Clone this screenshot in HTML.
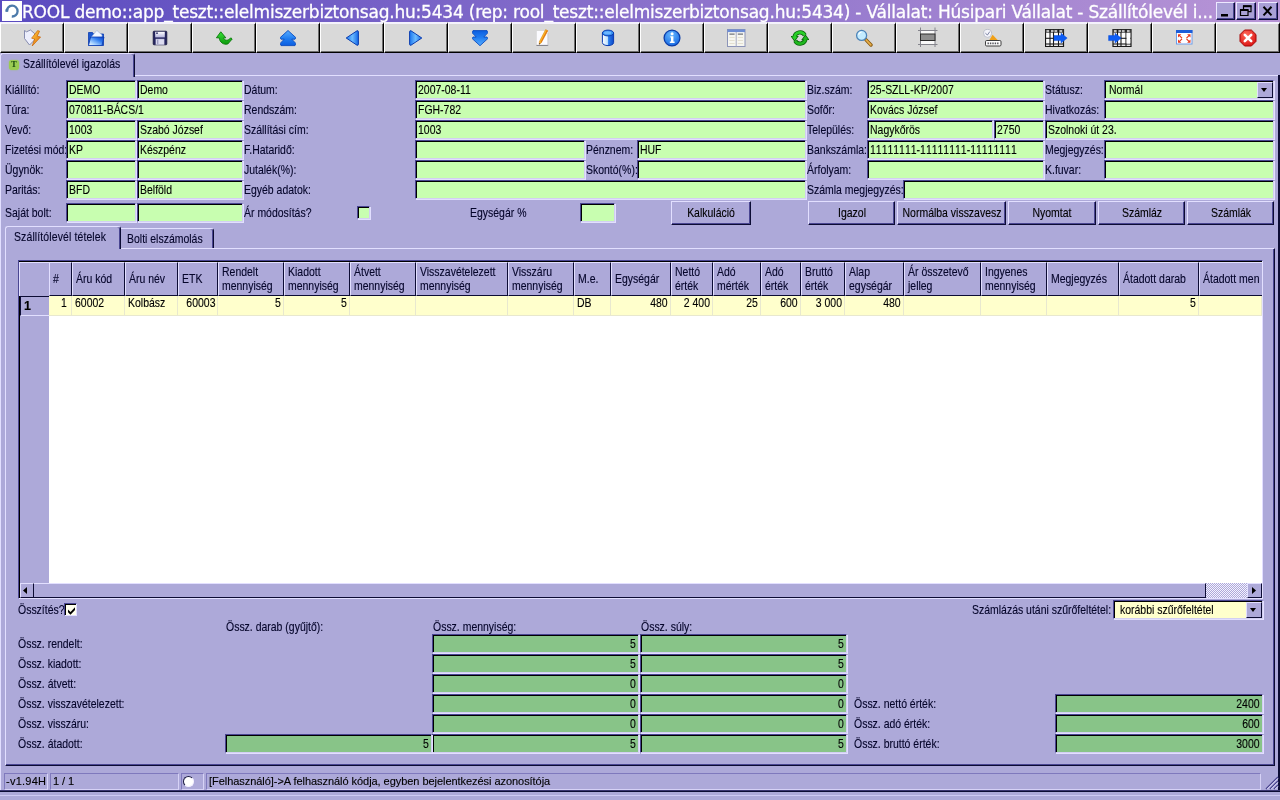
<!DOCTYPE html>
<html lang="hu"><head><meta charset="utf-8"><title>ROOL</title>
<style>
*{box-sizing:border-box;margin:0;padding:0}
html,body{width:1280px;height:800px;overflow:hidden;background:#ada9d9}
body{position:relative;font-family:"Liberation Sans","DejaVu Sans",sans-serif;font-size:12.400px;color:#05052a;line-height:13px;-webkit-text-stroke:.12px}
#w{position:absolute;left:0;top:0;width:1280px;height:800px;overflow:hidden;will-change:transform;background:#ada9d9}
#w>div,#grid>div{position:absolute}
#title{left:0;top:0;width:1280px;height:22px;background:linear-gradient(90deg,#5a4bc0 0%,#b895d6 100%)}
#title>div{position:absolute}
#appico{left:2px;top:1px;width:20px;height:20px;background:#fff}
#ttext{left:22px;top:2px;height:20px;line-height:21px;overflow:hidden;-webkit-text-stroke:0.3px #fff;font-family:"DejaVu Sans","Liberation Sans",sans-serif;font-size:17px;color:#fff;white-space:nowrap;letter-spacing:-0.21px}
.wb{top:2px;width:19px;height:18px;background:#a9a0d6;border-top:1px solid #ece8ff;border-left:1px solid #ece8ff;border-right:1px solid #0c0c34;border-bottom:1px solid #0c0c34;box-shadow:inset -1px -1px 0 #4a4590}
.wb svg{position:absolute;left:-1px;top:-1px}
.tb{top:22px;width:64px;height:31px;background:#d9d9d9;border-top:2px solid #fff;border-top-color:#f4f2fc;border-left:1px solid #fff;border-right:1px solid #000;border-bottom:1px solid #000;box-shadow:inset -1px -1px 0 #6e6e6e}
.tb svg{position:absolute}
#tabline{left:0;top:75px;width:1278px;height:1px;background:#e2dfff}
#frl{left:0;top:75px;width:1px;height:715px;background:#e2dfff}
#frr{left:1278px;top:75px;width:2px;height:717px;background:#0c0c34}
#maintab{left:0;top:53px;width:135px;height:24px;background:#ada9d9;border-top:1px solid #e2dfff;border-left:1px solid #e2dfff;border-right:1px solid #0c0c34;box-shadow:inset -1px 0 0 #4a4692;border-radius:3px 3px 0 0}
.tico{position:absolute;left:8px;top:6px;width:10px;height:10px;background:#9acb52;border-radius:3px;box-shadow:0 0 1.500px #9acb52;font:bold 8px/10px "Liberation Serif",serif;color:#1a4a10;text-align:center;letter-spacing:0}
.tl{position:absolute;left:22px;top:4px;white-space:nowrap}
.l{white-space:nowrap;height:13px;line-height:13px;transform:scaleX(.845);transform-origin:0 0}
.t{display:inline-block;white-space:nowrap;transform:scaleX(.845);transform-origin:0 0}
.tr{transform-origin:100% 0}
.tc{position:absolute;left:50%;top:0;white-space:nowrap;transform:translateX(-50%) scaleX(.845)}
.f{background:#c8feb0;border-top:1px solid #4a4692;border-left:1px solid #4a4692;border-right:1px solid #d2cff2;border-bottom:1px solid #d2cff2;box-shadow:inset 1px 1px 0 #000,1px 1px 0 #e2dfff;padding-left:2px;padding-top:1px;line-height:17px;white-space:nowrap;overflow:hidden;color:#000}
.ft{background:#88c488}
.fy{background:#ffffcc}
.b{background:#ada9d9;border-top:1px solid #e2dfff;border-left:1px solid #e2dfff;border-right:1px solid #0c0c34;border-bottom:1px solid #0c0c34;box-shadow:inset -1px -1px 0 #4a4692;text-align:center;white-space:nowrap;color:#000}
.dd{width:16px;height:16px;background:#ada9d9;border-top:1px solid #e2dfff;border-left:1px solid #e2dfff;border-right:1px solid #0c0c34;border-bottom:1px solid #0c0c34}
.dd i{position:absolute;left:3px;top:5px;border:3.500px solid transparent;border-top:4px solid #000;border-bottom:0}
#tp{left:5px;top:248px;width:1270px;height:518px;border-top:1px solid #e2dfff;border-left:1px solid #e2dfff;border-right:1px solid #0c0c34;border-bottom:1px solid #0c0c34;box-shadow:inset -1px -1px 0 #4a4692}
#tab1{left:5px;top:226px;width:116px;height:23px;background:#ada9d9;border-top:1px solid #e2dfff;border-left:1px solid #e2dfff;border-right:1px solid #0c0c34;box-shadow:inset -1px 0 0 #4a4692;border-radius:3px 3px 0 0;padding:4px 0 0 8px;white-space:nowrap}
#tab2{left:121px;top:228px;width:93px;height:20px;background:#ada9d9;border-top:1px solid #e2dfff;border-right:1px solid #0c0c34;box-shadow:inset -1px 0 0 #4a4692;border-radius:0 3px 0 0;padding:4px 0 0 6px;white-space:nowrap}
#grid{left:0;top:0;width:0;height:0}
#gwhite{left:18px;top:260px;width:1245px;height:339px;background:#fff;border-top:1px solid #4a4692;border-left:1px solid #4a4692;border-right:1px solid #e2dfff;border-bottom:1px solid #e2dfff;box-shadow:inset 1px 1px 0 #000}
#rowhdrcol{left:20px;top:296px;width:29px;height:287px;background:#ada9d9}
.gh{background:#ada9d9;border-top:1px solid #e2dfff;border-left:1px solid #e2dfff;border-right:1px solid #0c0c34;border-bottom:1px solid #0c0c34;padding-left:3px;white-space:nowrap;overflow:hidden;line-height:14px;color:#05052a}
.g1{padding-top:9px}
.g2{padding-top:2px}
.gc{background:#ffffcc;border-right:1px solid #e8e8cf;border-bottom:1px solid #e8e8cf;line-height:15px;white-space:nowrap;overflow:hidden;color:#000}
#rh1{left:20px;top:296px;width:29px;height:20px;background:#ada9d9;border-top:1px solid #0c0c34;border-left:1px solid #0c0c34;border-bottom:1px solid #e2dfff;border-right:0;font-weight:bold;padding:3px 0 0 3px;font-size:12.500px;color:#000}
#hsb{left:20px;top:583px;width:1242px;height:15px;background:#ada9d9}
#hsb>div{position:absolute;top:0;height:15px}
.sbtn{width:15px;background:#ada9d9;border-top:1px solid #e2dfff;border-left:1px solid #e2dfff;border-right:1px solid #0c0c34;border-bottom:1px solid #0c0c34}
.sbtn svg{position:absolute}
#sthumb{left:14px;width:1172px;background:#ada9d9;border-top:1px solid #e2dfff;border-right:1px solid #0c0c34;border-bottom:1px solid #0c0c34}
#strack{left:1186px;width:41px;background:repeating-conic-gradient(#f4f2ff 0 25%,#ada9d9 0 50%) 0 0/2px 2px}
.chk{width:13px;height:13px;background:#ffffee;border-top:1px solid #4a4692;border-left:1px solid #4a4692;border-right:1px solid #e2dfff;border-bottom:1px solid #e2dfff;box-shadow:inset 1px 1px 0 #000}
.chk svg{position:absolute;left:2px;top:2px}
#sbline{left:0;top:768px;width:1280px;height:1px;background:#ada9d9}
.sp{top:773px;height:17px;border-top:1px solid #7f79bd;border-left:1px solid #7f79bd;border-right:1px solid #d6d2f6;border-bottom:1px solid #d6d2f6;padding-left:2px;line-height:15px;white-space:nowrap;overflow:hidden;color:#000;font-size:11px;letter-spacing:-0.05px}
.dot{position:absolute;left:1px;top:2px;width:11px;height:11px;border-radius:50%;background:#fff;border:1px solid;border-color:#1a1a40 #f4f2ff #f4f2ff #1a1a40;transform:rotate(0deg)}
#grip{left:1265px;top:776px;width:14px;height:14px}
#botl2{left:0;top:795px;width:1280px;height:1px;background:#cdc9f3}
#botline{left:0;top:790px;width:1280px;height:2px;background:#0c0c34;border-top:1px solid #3a3570}
</style></head>
<body>
<div id="w">
<div id="title"><div id="appico"><svg width="20" height="20" viewBox="0 0 20 20"><path d="M4.800 10.600A5.400 5.400 0 1 1 9.800 15.500" fill="none" stroke="#4c7aaa" stroke-width="2.300"/><path d="M3.400 8.400L6.600 7.600 6.200 10.800 3.600 10.800z" fill="#4c7aaa"/></svg></div><div id="ttext">ROOL demo::app_teszt::elelmiszerbiztonsag.hu:5434 (rep: rool_teszt::elelmiszerbiztonsag.hu:5434) - Vállalat: Húsipari Vállalat - Szállítólevél i...</div><div class="wb" style="left:1216px"><svg width="19" height="18"><rect x="5" y="12" width="7" height="2.500" fill="#000"/></svg></div><div class="wb" style="left:1236px;width:20px"><svg width="20" height="18"><path d="M7.500 4.200h7.500v5.500h-7.500z" fill="none" stroke="#000" stroke-width="1.200"/><path d="M7 4.200h8.500" stroke="#000" stroke-width="2"/><path d="M4.500 8h7.500v5.500h-7.500z" fill="#a8a0d4" stroke="#000" stroke-width="1.200"/><path d="M4 8h8.500" stroke="#000" stroke-width="2"/></svg></div><div class="wb" style="left:1258px;width:20px"><svg width="20" height="18"><path d="M5.500 4.800l8 8.600M13.500 4.800l-8 8.600" stroke="#000" stroke-width="2"/></svg></div></div>
<svg width="0" height="0" style="position:absolute"><defs><linearGradient id="gb" x1="0" y1="0" x2="0" y2="1"><stop offset="0" stop-color="#58adff"/><stop offset=".55" stop-color="#1f7cf0"/><stop offset="1" stop-color="#0c5ee0"/></linearGradient><linearGradient id="gbh" x1="0" y1="0" x2="1" y2="0"><stop offset="0" stop-color="#1a74ee"/><stop offset=".5" stop-color="#6cbcff"/><stop offset="1" stop-color="#1266e6"/></linearGradient><linearGradient id="gg" x1="0" y1="0" x2="0" y2="1"><stop offset="0" stop-color="#36e036"/><stop offset="1" stop-color="#0c9a0c"/></linearGradient><linearGradient id="go" x1="0" y1="0" x2="1" y2="1"><stop offset="0" stop-color="#ffd040"/><stop offset="1" stop-color="#e06808"/></linearGradient><linearGradient id="gf" x1="1" y1="0" x2="0" y2="1"><stop offset="0" stop-color="#0c3cc0"/><stop offset=".35" stop-color="#2f7cf0"/><stop offset=".72" stop-color="#a4d0ff"/><stop offset="1" stop-color="#ffffff"/></linearGradient><linearGradient id="gd" x1="0" y1="0" x2="0" y2="1"><stop offset="0" stop-color="#ffffff"/><stop offset="1" stop-color="#b4b4dc"/></linearGradient><linearGradient id="gc" x1="0" y1="0" x2="1" y2="0"><stop offset="0" stop-color="#ffffff"/><stop offset=".45" stop-color="#bfe2ff"/><stop offset=".55" stop-color="#2b7cec"/><stop offset="1" stop-color="#0c48c8"/></linearGradient><radialGradient id="gi" cx=".45" cy=".3" r=".8"><stop offset="0" stop-color="#68b8ff"/><stop offset="1" stop-color="#0c60e0"/></radialGradient><radialGradient id="gr" cx=".4" cy=".3" r=".8"><stop offset="0" stop-color="#ff6a5a"/><stop offset="1" stop-color="#d80c0c"/></radialGradient></defs></svg>
<div class="tb" style="left:0px"><svg width="18" height="18" viewBox="0 0 18 18" style="left:23px;top:5px"><path d="M0.500 1.500L2.500 2.800 6.500 1 10.500 4.500V11L5.500 16 0.500 9.500z" fill="#eceefc" stroke="#7c82a8" stroke-width=".9"/><path d="M13.600 1.600L7.600 9.200l3 .8L8.200 17 16.600 8 13.200 7.200 15.600 2.200z" fill="url(#go)" stroke="#c86408" stroke-width=".7"/></svg></div>
<div class="tb" style="left:64px"><svg width="17" height="17" viewBox="0 0 17 17" style="left:23px;top:6px"><path d="M0.500 2.500H4.500L5.500 4H15.500V15.500H0.500z" fill="#1c58d0" stroke="#0c3cb0" stroke-width=".8"/><path d="M3.400 7L8.800.4 14 5V8.500H3.400z" fill="#f2f7ff" stroke="#9cb0e0" stroke-width=".6"/><path d="M0.500 15.500L2.600 7H16L13.900 15.500z" fill="url(#gf)" stroke="#0c3cb0" stroke-width=".8"/></svg></div>
<div class="tb" style="left:128px"><svg width="16" height="16" viewBox="0 0 16 16" style="left:23px;top:6px"><rect x="1.200" y="1.200" width="13.600" height="13.600" rx=".8" fill="#24245e" stroke="#14143c" stroke-width=".8"/><rect x="3.200" y="1.800" width="9.600" height="5.600" fill="url(#gd)"/><rect x="4.200" y="2.400" width="1.600" height="1.600" fill="#303068"/><rect x="3.600" y="8.800" width="8.800" height="6" fill="#c4c4de"/><rect x="4.200" y="9.600" width="7.600" height="4.600" fill="#dcdcf0"/><rect x="5" y="9.600" width="1.400" height="4.600" fill="#9c9cc0"/></svg></div>
<div class="tb" style="left:192px"><svg width="17" height="16" viewBox="0 0 17 16" style="left:23px;top:6px"><path d="M4.800 1.800L0.400 7.800H3.200C3.600 12.200 7.600 15.200 11.800 14L16.200 9 14.800 7.800C12 11.400 8.200 10.600 7.600 7.800H9.800z" fill="url(#gg)" stroke="#0a780a" stroke-width=".9" stroke-linejoin="round"/></svg></div>
<div class="tb" style="left:256px"><svg width="16" height="17" viewBox="0 0 16 17" style="left:23px;top:6px"><path d="M8 .5L15.800 7.600 15 9.200H11.800L15.800 13.400 15 15.600H1L0.200 13.400 4.200 9.200H1L0.200 7.600z" fill="url(#gb)" stroke="#0a4cc0" stroke-width=".9" stroke-linejoin="round"/></svg></div>
<div class="tb" style="left:320px"><svg width="16" height="17" viewBox="0 0 16 17" style="left:23px;top:6px"><path d="M2.200 8L13 .8Q14.400 .4 14.400 1.800V14.200Q14.400 15.600 13 15.200z" fill="url(#gbh)" stroke="#0a3cb0" stroke-width="1" stroke-linejoin="round"/></svg></div>
<div class="tb" style="left:384px"><svg width="16" height="17" viewBox="0 0 16 17" style="left:23px;top:6px"><path d="M13.800 8L3 .8Q1.600 .4 1.600 1.800V14.200Q1.600 15.600 3 15.200z" fill="url(#gbh)" stroke="#0a3cb0" stroke-width="1" stroke-linejoin="round"/></svg></div>
<div class="tb" style="left:448px"><svg width="16" height="17" viewBox="0 0 16 17" style="left:23px;top:6px"><g transform="translate(0,16.200) scale(1,-1)"><path d="M8 .5L15.800 7.600 15 9.200H11.800L15.800 13.400 15 15.600H1L0.200 13.400 4.200 9.200H1L0.200 7.600z" fill="url(#gb)" stroke="#0a4cc0" stroke-width=".9" stroke-linejoin="round"/></g></svg></div>
<div class="tb" style="left:512px"><svg width="14" height="18" viewBox="0 0 14 18" style="left:23px;top:5px"><rect x=".8" y="2" width="11" height="14.200" fill="#fbfbff"/><path d="M.4 16.400H12.200" stroke="#7c7c84" stroke-width="1"/><path d="M11.900 4V16.400" stroke="#c4c4cc" stroke-width=".8"/><path d="M9.600 .6L11.800 1.700 5.400 13.600 3.200 15.400 3.400 12.500z" fill="#fbb824" stroke="#d88010" stroke-width=".5"/><path d="M10.800 1.200L11.800 1.700 5.400 13.600 4.500 13.200z" fill="#e27414"/><path d="M3.200 15.400L3.300 13.900 4.400 14.400z" fill="#303030"/></svg></div>
<div class="tb" style="left:576px"><svg width="16" height="18" viewBox="0 0 16 18" style="left:23px;top:5px"><path d="M2.400 4V13.600C2.400 15.400 5 16.600 8 16.600S13.600 15.400 13.600 13.600V4z" fill="url(#gc)" stroke="#0a3cb0" stroke-width="1"/><ellipse cx="8" cy="4" rx="5.600" ry="2.900" fill="#3a94f4" stroke="#0a3cb0" stroke-width="1"/><ellipse cx="7.600" cy="3.700" rx="3.600" ry="1.500" fill="#6cb6ff"/></svg></div>
<div class="tb" style="left:640px"><svg width="18" height="18" viewBox="0 0 18 18" style="left:22px;top:5px"><circle cx="9" cy="9" r="7.900" fill="url(#gi)" stroke="#0a3ca8" stroke-width="1.300"/><path d="M7.300 7.200H10.400V12.600H11.600V13.900H6.800V12.600H8V8.500H7.300z" fill="#fff"/><circle cx="9.100" cy="4.700" r="1.500" fill="#fff"/></svg></div>
<div class="tb" style="left:704px"><svg width="19" height="19" viewBox="0 0 19 19" style="left:22px;top:4px"><rect x=".5" y="1.500" width="17.500" height="17" fill="#f6f6f0" stroke="#8c94b8" stroke-width="1"/><rect x=".5" y="1.500" width="17.500" height="2.600" fill="#6c8cd4"/><path d="M9.200 4V18.500" stroke="#a4a8c0" stroke-width="1"/><path d="M2.400 6.200H7.600M10.800 6.200H16" stroke="#70747c" stroke-width="1.300"/><path d="M2.400 9.500H7.600M10.800 9.500H16M2.400 12.500H7.600M10.800 12.500H16M2.400 15.500H7.600M10.800 15.500H16" stroke="#e4e0d0" stroke-width="1"/></svg></div>
<div class="tb" style="left:768px"><svg width="18" height="18" viewBox="0 0 18 18" style="left:22px;top:5px"><path d="M13.800 6.200A5.500 5.500 0 0 0 3.500 8.500" fill="none" stroke="#0a640a" stroke-width="4.200"/><path d="M-.6 7H7.800L3.600 12.800z" fill="#0a640a"/><path d="M4.200 11.800A5.500 5.500 0 0 0 14.500 9.500" fill="none" stroke="#0a640a" stroke-width="4.200"/><path d="M18.600 11H10.200L14.400 5.200z" fill="#0a640a"/><path d="M13.800 6.200A5.500 5.500 0 0 0 3.500 8.500" fill="none" stroke="#2ad02a" stroke-width="2.600"/><path d="M.8 7.600H6.400L3.600 11.600z" fill="#2ad02a"/><path d="M4.200 11.800A5.500 5.500 0 0 0 14.500 9.500" fill="none" stroke="#1fb81f" stroke-width="2.600"/><path d="M17.200 10.400H11.600L14.400 6.400z" fill="#1fb81f"/></svg></div>
<div class="tb" style="left:832px"><svg width="18" height="18" viewBox="0 0 18 18" style="left:22px;top:5px"><path d="M10.800 10.600L16 16" stroke="#8a5a10" stroke-width="3.400" stroke-linecap="round"/><path d="M11.200 11L15.800 15.800" stroke="#e8b04c" stroke-width="1.800" stroke-linecap="round"/><circle cx="6.600" cy="6.400" r="5" fill="#c4ecff" stroke="#4c84b8" stroke-width="1.300"/><path d="M3.600 5.600A3.400 3.400 0 0 1 6.400 3.200" stroke="#fff" stroke-width="1.300" fill="none"/></svg></div>
<div class="tb" style="left:896px"><svg width="20" height="21" viewBox="0 0 20 21" style="left:21px;top:3px"><rect x="2.500" y="3.500" width="14.500" height="14" fill="#fafafa"/><path d="M2.500 .5V20M17 .5V20M0 3.500H19.500M0 17.500H19.500" stroke="#84848c" stroke-width="1"/><rect x="2.500" y="7" width="14.500" height="6.500" fill="#8e8e8e" stroke="#2c2c2c" stroke-width="1"/></svg></div>
<div class="tb" style="left:960px"><svg width="20" height="20" viewBox="0 0 20 20" style="left:22px;top:4px"><circle cx="4.600" cy="5.400" r="4" fill="#f4f4fa" stroke="#b8bcc8" stroke-width=".9"/><path d="M2.400 5.200L4.400 7 6.800 3.600" stroke="#7c84a4" stroke-width="1" fill="none"/><path d="M9.600 6.800L14.600 12H6.400z" fill="#f0a018"/><rect x="2.500" y="12.500" width="15.500" height="5.500" rx="1.200" fill="#fdfdfd" stroke="#3c3c3c" stroke-width="1"/><path d="M4.500 15.400H16.200" stroke="#54545c" stroke-width="1.800" stroke-dasharray="1.400 1"/></svg></div>
<div class="tb" style="left:1024px"><svg width="24" height="18" viewBox="0 0 24 18" style="left:20px;top:5px"><rect x="0.5" y=".5" width="18" height="17" fill="#fdfdfd" stroke="#181818" stroke-width="1.200"/><rect x="0.5" y=".5" width="18" height="3.200" fill="#3c3c3c"/><path d="M5 .5V17.500" stroke="#181818" stroke-width="1.100"/><path d="M8.5 .5V17.500" stroke="#181818" stroke-width="1.100"/><path d="M13.5 .5V17.500" stroke="#181818" stroke-width="1.100"/><path d="M0.5 9.3H18.5" stroke="#181818" stroke-width="1.100"/><path d="M0.5 15H18.5" stroke="#181818" stroke-width="1.100"/><rect x="1.5" y="1.300" width="2.600" height="1.400" fill="#f4f4f4"/><rect x="6" y="1.300" width="2.600" height="1.400" fill="#f4f4f4"/><rect x="9.5" y="1.300" width="2.600" height="1.400" fill="#f4f4f4"/><rect x="14.5" y="1.300" width="2.600" height="1.400" fill="#f4f4f4"/><path d="M9 6.600H16V4.200L22.200 9.100 16 14V11.600H9z" fill="#0c5cf4" stroke="#0a4cd8" stroke-width=".5"/></svg></div>
<div class="tb" style="left:1088px"><svg width="24" height="18" viewBox="0 0 24 18" style="left:19px;top:5px"><rect x="5.0" y=".5" width="18" height="17" fill="#fdfdfd" stroke="#181818" stroke-width="1.200"/><rect x="5.0" y=".5" width="18" height="3.200" fill="#3c3c3c"/><path d="M9.5 .5V17.500" stroke="#181818" stroke-width="1.100"/><path d="M13.0 .5V17.500" stroke="#181818" stroke-width="1.100"/><path d="M18.0 .5V17.500" stroke="#181818" stroke-width="1.100"/><path d="M5.0 9.3H23.0" stroke="#181818" stroke-width="1.100"/><path d="M5.0 15H23.0" stroke="#181818" stroke-width="1.100"/><rect x="6.0" y="1.300" width="2.600" height="1.400" fill="#f4f4f4"/><rect x="10.5" y="1.300" width="2.600" height="1.400" fill="#f4f4f4"/><rect x="14.0" y="1.300" width="2.600" height="1.400" fill="#f4f4f4"/><rect x="19.0" y="1.300" width="2.600" height="1.400" fill="#f4f4f4"/><rect x="18.600" y="4" width="3.600" height="10.600" fill="#fdfdfd"/><path d="M.6 6.600H7V4.200L13.200 9.100 7 14V11.600H.6z" fill="#0c5cf4" stroke="#0a4cd8" stroke-width=".5"/></svg></div>
<div class="tb" style="left:1152px"><svg width="17" height="17" viewBox="0 0 17 17" style="left:23px;top:5px"><rect x=".5" y="1.500" width="15.500" height="13.500" fill="#fdfdff" stroke="#6c9ce8" stroke-width="1"/><rect x="0" y="1" width="16.500" height="3" fill="#1c5cd8"/><path d="M2 5.200h3.400L2 8.600zM14.500 5.200h-3.400L14.500 8.600zM2 13.800h3.400L2 10.400zM14.500 13.800h-3.400L14.500 10.400z" fill="#e8381c"/><path d="M3 6.200l3 3M13.500 6.200l-3 3M3 12.800l3-3M13.500 12.800l-3-3" stroke="#e8381c" stroke-width="1.200"/></svg></div>
<div class="tb" style="left:1216px"><svg width="18" height="18" viewBox="0 0 18 18" style="left:22px;top:5px"><path d="M5.600 1H12.400L17 5.600V12.400L12.400 17H5.600L1 12.400V5.600z" fill="url(#gr)" stroke="#a40808" stroke-width="1"/><path d="M5.800 5.800L12.200 12.200M12.200 5.800L5.800 12.200" stroke="#fff" stroke-width="2.600" stroke-linecap="round"/></svg></div>
<div id="tabline"></div><div id="frl"></div><div id="frr"></div>
<div id="maintab"><span class="tico">T</span><span class="tl t">Szállítólevél igazolás</span></div>
<div class="l " style="left:5px;top:84px;">Kiállító:</div>
<div class="l " style="left:5px;top:104px;">Túra:</div>
<div class="l " style="left:5px;top:124px;">Vevő:</div>
<div class="l " style="left:5px;top:144px;">Fizetési mód:</div>
<div class="l " style="left:5px;top:164px;">Ügynök:</div>
<div class="l " style="left:5px;top:184px;">Paritás:</div>
<div class="l " style="left:5px;top:207px;">Saját bolt:</div>
<div class="f" style="left:66px;top:80px;width:70px;height:19px;"><span class="t">DEMO</span></div>
<div class="f" style="left:137px;top:80px;width:106px;height:19px;"><span class="t">Demo</span></div>
<div class="f" style="left:66px;top:100px;width:177px;height:19px;"><span class="t">070811-BÁCS/1</span></div>
<div class="f" style="left:66px;top:120px;width:70px;height:19px;"><span class="t">1003</span></div>
<div class="f" style="left:137px;top:120px;width:106px;height:19px;"><span class="t">Szabó József</span></div>
<div class="f" style="left:66px;top:140px;width:70px;height:19px;"><span class="t">KP</span></div>
<div class="f" style="left:137px;top:140px;width:106px;height:19px;"><span class="t">Készpénz</span></div>
<div class="f" style="left:66px;top:160px;width:70px;height:19px;"></div>
<div class="f" style="left:137px;top:160px;width:106px;height:19px;"></div>
<div class="f" style="left:66px;top:180px;width:70px;height:19px;"><span class="t">BFD</span></div>
<div class="f" style="left:137px;top:180px;width:106px;height:19px;"><span class="t">Belföld</span></div>
<div class="f" style="left:66px;top:203px;width:70px;height:19px;"></div>
<div class="f" style="left:137px;top:203px;width:106px;height:19px;"></div>
<div class="l " style="left:244px;top:84px;">Dátum:</div>
<div class="l " style="left:244px;top:104px;">Rendszám:</div>
<div class="l " style="left:244px;top:124px;">Szállítási cím:</div>
<div class="l " style="left:244px;top:144px;">F.Hataridő:</div>
<div class="l " style="left:244px;top:164px;">Jutalék(%):</div>
<div class="l " style="left:244px;top:184px;">Egyéb adatok:</div>
<div class="l " style="left:244px;top:207px;">Ár módosítás?</div>
<div class="f" style="left:415px;top:80px;width:391px;height:19px;"><span class="t">2007-08-11</span></div>
<div class="f" style="left:415px;top:100px;width:391px;height:19px;"><span class="t">FGH-782</span></div>
<div class="f" style="left:415px;top:120px;width:391px;height:19px;"><span class="t">1003</span></div>
<div class="f" style="left:415px;top:140px;width:170px;height:19px;"></div>
<div class="l " style="left:586px;top:144px;">Pénznem:</div>
<div class="f" style="left:637px;top:140px;width:169px;height:19px;"><span class="t">HUF</span></div>
<div class="f" style="left:415px;top:160px;width:170px;height:19px;"></div>
<div class="l " style="left:586px;top:164px;">Skontó(%):</div>
<div class="f" style="left:637px;top:160px;width:169px;height:19px;"></div>
<div class="f" style="left:415px;top:180px;width:391px;height:19px;"></div>
<div class="f" style="left:357px;top:206px;width:13px;height:13px;"></div>
<div class="l " style="left:470px;top:207px;">Egységár %</div>
<div class="f" style="left:580px;top:203px;width:35px;height:19px;"></div>
<div class="b" style="left:671px;top:201px;width:80px;height:24px;line-height:22px"><span class="tc">Kalkuláció</span></div>
<div class="l " style="left:807px;top:84px;">Biz.szám:</div>
<div class="l " style="left:807px;top:104px;">Sofőr:</div>
<div class="l " style="left:807px;top:124px;">Település:</div>
<div class="l " style="left:807px;top:144px;">Bankszámla:</div>
<div class="l " style="left:807px;top:164px;">Árfolyam:</div>
<div class="l " style="left:807px;top:184px;">Számla megjegyzés:</div>
<div class="f" style="left:867px;top:80px;width:177px;height:19px;"><span class="t">25-SZLL-KP/2007</span></div>
<div class="f" style="left:867px;top:100px;width:177px;height:19px;"><span class="t">Kovács József</span></div>
<div class="f" style="left:867px;top:120px;width:126px;height:19px;"><span class="t">Nagykőrös</span></div>
<div class="f" style="left:994px;top:120px;width:50px;height:19px;"><span class="t">2750</span></div>
<div class="f" style="left:1045px;top:120px;width:229px;height:19px;"><span class="t">Szolnoki út 23.</span></div>
<div class="f" style="left:867px;top:140px;width:177px;height:19px;font-kerning:none"><span class="t">11111111-11111111-11111111</span></div>
<div class="f" style="left:867px;top:160px;width:177px;height:19px;"></div>
<div class="f" style="left:903px;top:180px;width:371px;height:19px;"></div>
<div class="l " style="left:1045px;top:84px;">Státusz:</div>
<div class="l " style="left:1045px;top:104px;">Hivatkozás:</div>
<div class="l " style="left:1045px;top:144px;">Megjegyzés:</div>
<div class="l " style="left:1045px;top:164px;">K.fuvar:</div>
<div class="f" style="left:1104px;top:80px;width:170px;height:19px;padding-left:4px"><span class="t">Normál</span></div>
<div class="dd" style="left:1257px;top:82px"><i></i></div>
<div class="f" style="left:1104px;top:100px;width:170px;height:19px;"></div>
<div class="f" style="left:1104px;top:140px;width:170px;height:19px;"></div>
<div class="f" style="left:1104px;top:160px;width:170px;height:19px;"></div>
<div class="b" style="left:808px;top:201px;width:87px;height:24px;line-height:22px"><span class="tc">Igazol</span></div>
<div class="b" style="left:897px;top:201px;width:109px;height:24px;line-height:22px"><span class="tc">Normálba visszavesz</span></div>
<div class="b" style="left:1008px;top:201px;width:88px;height:24px;line-height:22px"><span class="tc">Nyomtat</span></div>
<div class="b" style="left:1098px;top:201px;width:87px;height:24px;line-height:22px"><span class="tc">Számláz</span></div>
<div class="b" style="left:1187px;top:201px;width:87px;height:24px;line-height:22px"><span class="tc">Számlák</span></div>
<div id="tp"></div>
<div id="tab1"><span class="t" style="letter-spacing:.14px">Szállítólevél tételek</span></div>
<div id="tab2"><span class="t">Bolti elszámolás</span></div>
<div id="grid">
<div id="gwhite"></div>
<div id="rowhdrcol"></div>
<div class="gh" style="left:19px;top:262px;width:30px;height:34px;border-right:0;border-bottom:0"></div>
<div class="gh g1" style="left:49px;top:262px;width:23px;height:34px;"><span class="t">#</span></div>
<div class="gc" style="left:49px;top:296px;width:23px;height:20px;text-align:right;padding-right:4px;"><span class="t tr">1</span></div>
<div class="gh g1" style="left:72px;top:262px;width:53px;height:34px;"><span class="t">Áru kód</span></div>
<div class="gc" style="left:72px;top:296px;width:53px;height:20px;padding-left:3px;"><span class="t">60002</span></div>
<div class="gh g1" style="left:125px;top:262px;width:53px;height:34px;"><span class="t">Áru név</span></div>
<div class="gc" style="left:125px;top:296px;width:53px;height:20px;padding-left:3px;"><span class="t">Kolbász</span></div>
<div class="gh g1" style="left:178px;top:262px;width:40px;height:34px;"><span class="t">ETK</span></div>
<div class="gc" style="left:178px;top:296px;width:40px;height:20px;text-align:right;padding-right:2px;"><span class="t tr">60003</span></div>
<div class="gh g2" style="left:218px;top:262px;width:66px;height:34px;"><span class="t">Rendelt<br>mennyiség</span></div>
<div class="gc" style="left:218px;top:296px;width:66px;height:20px;text-align:right;padding-right:2px;"><span class="t tr">5</span></div>
<div class="gh g2" style="left:284px;top:262px;width:66px;height:34px;"><span class="t">Kiadott<br>mennyiség</span></div>
<div class="gc" style="left:284px;top:296px;width:66px;height:20px;text-align:right;padding-right:2px;"><span class="t tr">5</span></div>
<div class="gh g2" style="left:350px;top:262px;width:66px;height:34px;"><span class="t">Átvett<br>mennyiség</span></div>
<div class="gc" style="left:350px;top:296px;width:66px;height:20px;padding-left:3px;"><span class="t"></span></div>
<div class="gh g2" style="left:416px;top:262px;width:92px;height:34px;"><span class="t">Visszavételezett<br>mennyiség</span></div>
<div class="gc" style="left:416px;top:296px;width:92px;height:20px;padding-left:3px;"><span class="t"></span></div>
<div class="gh g2" style="left:508px;top:262px;width:66px;height:34px;"><span class="t">Visszáru<br>mennyiség</span></div>
<div class="gc" style="left:508px;top:296px;width:66px;height:20px;padding-left:3px;"><span class="t"></span></div>
<div class="gh g1" style="left:574px;top:262px;width:37px;height:34px;"><span class="t">M.e.</span></div>
<div class="gc" style="left:574px;top:296px;width:37px;height:20px;padding-left:3px;"><span class="t">DB</span></div>
<div class="gh g1" style="left:611px;top:262px;width:60px;height:34px;"><span class="t">Egységár</span></div>
<div class="gc" style="left:611px;top:296px;width:60px;height:20px;text-align:right;padding-right:2px;"><span class="t tr">480</span></div>
<div class="gh g2" style="left:671px;top:262px;width:42px;height:34px;"><span class="t">Nettó<br>érték</span></div>
<div class="gc" style="left:671px;top:296px;width:42px;height:20px;text-align:right;padding-right:2px;"><span class="t tr">2 400</span></div>
<div class="gh g2" style="left:713px;top:262px;width:48px;height:34px;"><span class="t">Adó<br>mérték</span></div>
<div class="gc" style="left:713px;top:296px;width:48px;height:20px;text-align:right;padding-right:2px;"><span class="t tr">25</span></div>
<div class="gh g2" style="left:761px;top:262px;width:40px;height:34px;"><span class="t">Adó<br>érték</span></div>
<div class="gc" style="left:761px;top:296px;width:40px;height:20px;text-align:right;padding-right:2px;"><span class="t tr">600</span></div>
<div class="gh g2" style="left:801px;top:262px;width:44px;height:34px;"><span class="t">Bruttó<br>érték</span></div>
<div class="gc" style="left:801px;top:296px;width:44px;height:20px;text-align:right;padding-right:2px;"><span class="t tr">3 000</span></div>
<div class="gh g2" style="left:845px;top:262px;width:59px;height:34px;"><span class="t">Alap<br>egységár</span></div>
<div class="gc" style="left:845px;top:296px;width:59px;height:20px;text-align:right;padding-right:2px;"><span class="t tr">480</span></div>
<div class="gh g2" style="left:904px;top:262px;width:77px;height:34px;"><span class="t">Ár összetevő<br>jelleg</span></div>
<div class="gc" style="left:904px;top:296px;width:77px;height:20px;padding-left:3px;"><span class="t"></span></div>
<div class="gh g2" style="left:981px;top:262px;width:66px;height:34px;"><span class="t">Ingyenes<br>mennyiség</span></div>
<div class="gc" style="left:981px;top:296px;width:66px;height:20px;padding-left:3px;"><span class="t"></span></div>
<div class="gh g1" style="left:1047px;top:262px;width:72px;height:34px;"><span class="t">Megjegyzés</span></div>
<div class="gc" style="left:1047px;top:296px;width:72px;height:20px;padding-left:3px;"><span class="t"></span></div>
<div class="gh g1" style="left:1119px;top:262px;width:80px;height:34px;"><span class="t">Átadott darab</span></div>
<div class="gc" style="left:1119px;top:296px;width:80px;height:20px;text-align:right;padding-right:2px;"><span class="t tr">5</span></div>
<div class="gh g1" style="left:1199px;top:262px;width:63px;height:34px;border-right:0;"><span class="t">Átadott men</span></div>
<div class="gc" style="left:1199px;top:296px;width:63px;height:20px;padding-left:3px;"><span class="t"></span></div>
<div id="rh1">1</div>
<div id="hsb"><div class="sbtn" style="left:0;width:14px"><svg width="4" height="7" style="left:2px;top:3px"><path d="M4 0V7L0 3.500z"/></svg></div><div id="sthumb"></div><div id="strack"></div><div class="sbtn" style="left:1227px;width:15px"><svg width="4" height="7" style="left:4px;top:3px"><path d="M0 0V7L4 3.500z"/></svg></div></div>
</div>
<div class="l " style="left:18px;top:604px;">Összítés?</div>
<div class="chk" style="left:64px;top:603px"><svg width="9" height="9" viewBox="0 0 9 9"><path d="M1 3.500v2.800L3.500 8.800 8 4V1.200L3.500 6z" fill="#000"/></svg></div>
<div class="l " style="left:972px;top:604px;">Számlázás utáni szűrőfeltétel:</div>
<div class="f fy" style="left:1113px;top:600px;width:150px;height:19px;padding-left:6px"><span class="t">korábbi szűrőfeltétel</span></div>
<div class="dd" style="left:1246px;top:602px"><i></i></div>
<div class="l " style="left:226px;top:621px;">Össz. darab (gyűjtő):</div>
<div class="l " style="left:433px;top:621px;">Össz. mennyiség:</div>
<div class="l " style="left:641px;top:621px;">Össz. súly:</div>
<div class="l " style="left:18px;top:638px;">Össz. rendelt:</div>
<div class="f ft" style="left:432px;top:634px;width:207px;height:19px;text-align:right;padding-right:2px;"><span class="t tr">5</span></div>
<div class="f ft" style="left:640px;top:634px;width:207px;height:19px;text-align:right;padding-right:2px;"><span class="t tr">5</span></div>
<div class="l " style="left:18px;top:658px;">Össz. kiadott:</div>
<div class="f ft" style="left:432px;top:654px;width:207px;height:19px;text-align:right;padding-right:2px;"><span class="t tr">5</span></div>
<div class="f ft" style="left:640px;top:654px;width:207px;height:19px;text-align:right;padding-right:2px;"><span class="t tr">5</span></div>
<div class="l " style="left:18px;top:678px;">Össz. átvett:</div>
<div class="f ft" style="left:432px;top:674px;width:207px;height:19px;text-align:right;padding-right:2px;"><span class="t tr">0</span></div>
<div class="f ft" style="left:640px;top:674px;width:207px;height:19px;text-align:right;padding-right:2px;"><span class="t tr">0</span></div>
<div class="l " style="left:18px;top:698px;">Össz. visszavételezett:</div>
<div class="f ft" style="left:432px;top:694px;width:207px;height:19px;text-align:right;padding-right:2px;"><span class="t tr">0</span></div>
<div class="f ft" style="left:640px;top:694px;width:207px;height:19px;text-align:right;padding-right:2px;"><span class="t tr">0</span></div>
<div class="l " style="left:18px;top:718px;">Össz. visszáru:</div>
<div class="f ft" style="left:432px;top:714px;width:207px;height:19px;text-align:right;padding-right:2px;"><span class="t tr">0</span></div>
<div class="f ft" style="left:640px;top:714px;width:207px;height:19px;text-align:right;padding-right:2px;"><span class="t tr">0</span></div>
<div class="l " style="left:18px;top:738px;">Össz. átadott:</div>
<div class="f ft" style="left:432px;top:734px;width:207px;height:19px;text-align:right;padding-right:2px;"><span class="t tr">5</span></div>
<div class="f ft" style="left:640px;top:734px;width:207px;height:19px;text-align:right;padding-right:2px;"><span class="t tr">5</span></div>
<div class="f ft" style="left:225px;top:734px;width:207px;height:19px;text-align:right;padding-right:2px;"><span class="t tr">5</span></div>
<div class="l " style="left:854px;top:698px;">Össz. nettó érték:</div>
<div class="f ft" style="left:1055px;top:694px;width:208px;height:19px;text-align:right;padding-right:2px;"><span class="t tr">2400</span></div>
<div class="l " style="left:854px;top:718px;">Össz. adó érték:</div>
<div class="f ft" style="left:1055px;top:714px;width:208px;height:19px;text-align:right;padding-right:2px;"><span class="t tr">600</span></div>
<div class="l " style="left:854px;top:738px;">Össz. bruttó érték:</div>
<div class="f ft" style="left:1055px;top:734px;width:208px;height:19px;text-align:right;padding-right:2px;"><span class="t tr">3000</span></div>
<div class="sp" style="left:4px;width:44px;padding-left:1px;letter-spacing:0.25px">-v1.94H</div>
<div class="sp" style="left:50px;width:129px">1 / 1</div>
<div class="sp" style="left:181px;width:23px"><b class="dot"></b></div>
<div class="sp" style="left:206px;width:1055px">[Felhasználó]-&gt;A felhasználó kódja, egyben bejelentkezési azonosítója</div>
<div id="grip"><svg width="14" height="14" viewBox="0 0 14 14"><path d="M13 1L1 13M13 5L5 13M13 9L9 13" stroke="#4a4590" stroke-width="1.500"/><path d="M13 2.300L2.300 13M13 6.300L6.300 13M13 10.300L10.300 13" stroke="#e6e2ff" stroke-width="1"/></svg></div>
<div id="botline"></div><div id="botl2"></div>
</div>
</body></html>
